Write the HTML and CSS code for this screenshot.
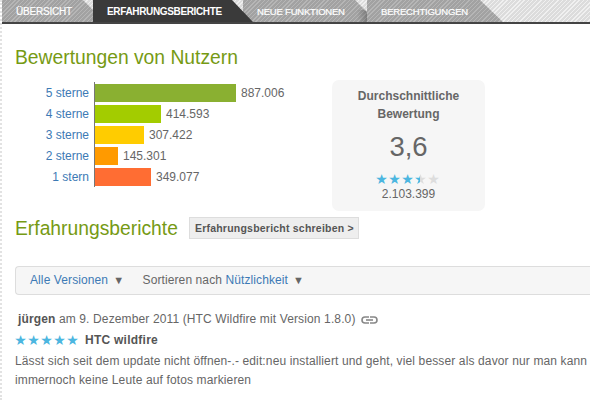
FILE: index.html
```html
<!DOCTYPE html>
<html>
	<head>
		<title>Erfahrungsberichte</title>
		<link rel="stylesheet" href="styles.css">
	</head>
	<body>
		<nav class="tabs">
			<a class="tab tab1">ÜBERSICHT</a>
			<a class="tab tab2">ERFAHRUNGSBERICHTE</a>
			<a class="tab tab3">NEUE FUNKTIONEN</a>
			<a class="tab tab4">BERECHTIGUNGEN</a>
		</nav>

		<section class="content">
			<h2 class="title">Bewertungen von Nutzern</h2>

			<div class="ratings">
				<div class="chart">
					<div class="row"><a class="label">5 sterne</a><div class="bar bar5"></div><span class="count">887.006</span></div>
					<div class="row"><a class="label">4 sterne</a><div class="bar bar4"></div><span class="count">414.593</span></div>
					<div class="row"><a class="label">3 sterne</a><div class="bar bar3"></div><span class="count">307.422</span></div>
					<div class="row"><a class="label">2 sterne</a><div class="bar bar2"></div><span class="count">145.301</span></div>
					<div class="row"><a class="label">1 stern</a><div class="bar bar1"></div><span class="count">349.077</span></div>
				</div>

				<div class="average">
					<h3>Durchschnittliche Bewertung</h3>
					<div class="score">3,6</div>
					<div class="stars">
						<span class="star">★</span><span class="star">★</span><span class="star">★</span><span class="star half">★</span><span class="star off">★</span>
					</div>
					<div class="total">2.103.399</div>
				</div>
			</div>

			<div class="reviews-head">
				<h2 class="title">Erfahrungsberichte</h2>
				<a class="write">Erfahrungsbericht schreiben &gt;</a>
			</div>

			<div class="filter">
				<a class="versions">Alle Versionen</a><span class="arrow">▼</span>
				<span class="sort">Sortieren nach <a>Nützlichkeit</a></span><span class="arrow">▼</span>
			</div>

			<div class="review">
				<div class="meta">
					<strong>jürgen</strong> am 9. Dezember 2011 (HTC Wildfire mit Version 1.8.0)
					<svg class="link" width="17" height="8" viewBox="0 0 17 8" fill="none" stroke="#888" stroke-width="1.6">
						<path d="M8 1H4a3 3 0 0 0 0 6h4"></path>
						<path d="M9 1h4a3 3 0 0 1 0 6H9"></path>
						<path d="M5 4h7"></path>
					</svg>
				</div>
				<div class="review-title">
					<span class="stars"><span class="star">★</span><span class="star">★</span><span class="star">★</span><span class="star">★</span><span class="star">★</span></span>
					<strong>HTC wildfire</strong>
				</div>
				<p>Lässt sich seit dem update nicht öffnen-.- edit:neu installiert und geht, viel besser als davor nur man kann immernoch keine Leute auf fotos markieren</p>
			</div>
		</section>
	</body>
</html>
```

FILE: styles.css
```css
html {
	overflow: hidden;
}
body {
	margin: 0;
	height: 400px;
	width: 588px;
	overflow: hidden;
	font-family: "Liberation Sans", Arial, sans-serif;
	font-size: 12px;
	color: #666;
	background-color: #fff;
	border-left: 2px dotted #e2e2e2;
}
a {
	color: #3d7ab5;
}

/* tabs: each one is cut on a diagonal, the next tab covers the lower part of the cut */
.tabs {
	display: flex;
	height: 22px;
	border-bottom: 2px solid #444;
	background: repeating-linear-gradient(135deg, #f0f0f0 0 1px, #dcdcdc 1px 3px);
	font-size: 10px;
	line-height: 23px;
	letter-spacing: -0.2px;
}
.tab {
	display: block;
	position: relative;
	box-sizing: border-box;
	flex: none;
	color: #fff;
	-webkit-text-stroke: 0.2px #fff;
	background: repeating-linear-gradient(135deg, #b6b6b6 0 1px, #a2a2a2 1px 3px);
}
.tab1 {
	width: 103px;
	margin-right: -12px;
	padding-left: 14px;
	clip-path: polygon(0 0, 81px 0, 103px 22px, 0 22px);
	z-index: 1;
}
.tab2 {
	width: 160px;
	margin-right: -10px;
	padding-left: 14px;
	font-weight: bold;
	letter-spacing: -0.35px;
	-webkit-text-stroke: 0;
	background: #3a3a3a;
	clip-path: polygon(0 0, 139px 0, 160px 22px, 0 22px);
	z-index: 3;
}
.tab3 {
	width: 134px;
	margin-right: -10px;
	padding-left: 14px;
	font-size: 9.5px;
	clip-path: polygon(0 0, 112px 0, 134px 22px, 0 22px);
	z-index: 1;
}
/* shade that the last tab throws on the one before */
.tab3::after {
	content: "";
	position: absolute;
	left: 114px;
	top: 10px;
	width: 10px;
	height: 12px;
	background: linear-gradient(90deg, rgba(0, 0, 0, 0), rgba(0, 0, 0, 0.25));
}
.tab4 {
	width: 136px;
	padding-left: 14px;
	font-size: 9.5px;
	clip-path: polygon(0 0, 113px 0, 136px 22px, 0 22px);
	z-index: 2;
}

.content {
	padding: 0 0 0 13px;
}
.title {
	margin: 0;
	font-size: 19.3px;
	font-weight: normal;
	line-height: 21px;
	color: #769a14;
}
.content > .title {
	padding-top: 23px;
}

/* rating chart */
.ratings {
	display: flex;
	align-items: flex-start;
	margin-top: 12px;
}
.chart {
	position: relative;
	width: 317px;
	padding-top: 2px;
}
.chart::before {
	content: "";
	position: absolute;
	left: 79px;
	top: 2px;
	bottom: 0;
	width: 1px;
	background-color: #777;
}
.row {
	display: flex;
	align-items: center;
	height: 21px;
}
.label {
	width: 74px;
	margin-right: 5px;
	text-align: right;
}
.bar {
	height: 18px;
	margin-left: 1px;
}
.bar5 { width: 141px; background-color: #8ab031; }
.bar4 { width: 66px; background-color: #a3cc00; }
.bar3 { width: 49px; background-color: #ffcc00; }
.bar2 { width: 23px; background-color: #ff9a00; }
.bar1 { width: 56px; background-color: #ff6d33; }
.count {
	margin-left: 5px;
}

/* average box */
.average {
	width: 153px;
	height: 131px;
	box-sizing: border-box;
	padding-top: 7px;
	background-color: #f6f6f6;
	border-radius: 7px;
	text-align: center;
}
.average h3 {
	margin: 0 20px;
	font-size: 12px;
	line-height: 18px;
	color: #666;
}
.score {
	margin-top: 9px;
	font-size: 27.5px;
	line-height: 30px;
	color: #666;
}
.average .stars {
	margin: 10px 2px 0 0;
}
.stars {
	font-family: "DejaVu Sans", sans-serif;
	font-size: 14px;
	line-height: 14px;
}
.star {
	display: inline-block;
	width: 13px;
	text-align: center;
	color: #4cb6e0;
}
.star.off {
	color: #ddd;
}
.star.half {
	background: linear-gradient(90deg, #4cb6e0 50%, #ddd 50%);
	-webkit-background-clip: text;
	background-clip: text;
	color: transparent;
}
.total {
	line-height: 16px;
}

/* reviews */
.reviews-head {
	display: flex;
	align-items: center;
	margin-top: 6px;
}
.write {
	margin-left: 11px;
	width: 170px;
	height: 22px;
	box-sizing: border-box;
	padding-left: 5px;
	line-height: 20px;
	background-color: #eee;
	border: 1px solid #ddd;
	font-size: 10.5px;
	font-weight: bold;
	color: #555;
	letter-spacing: 0.22px;
	white-space: nowrap;
}
.filter {
	margin-top: 27px;
	height: 29px;
	box-sizing: border-box;
	padding-left: 14px;
	line-height: 27px;
	background-color: #f6f6f6;
	border: 1px solid #ddd;
	border-right: 0;
	border-radius: 4px 0 0 4px;
	letter-spacing: 0.1px;
}
.arrow {
	margin-left: 5px;
	font-size: 11px;
	color: #666;
}
.sort {
	margin-left: 15px;
}
.review {
	padding: 16px 0 0 3px;
}
.meta {
	line-height: 17px;
	letter-spacing: 0.13px;
}
.meta strong, .review-title strong {
	color: #555;
}
.link {
	margin-left: 2px;
	vertical-align: -1px;
}
.review-title {
	display: flex;
	align-items: center;
	margin: 3px 0 0 -4px;
	line-height: 18px;
}
.review-title strong {
	margin-left: 6px;
	letter-spacing: 0.25px;
}
.review p {
	margin: 3px 0 0 -3px;
	line-height: 19px;
	letter-spacing: 0.13px;
}
```
